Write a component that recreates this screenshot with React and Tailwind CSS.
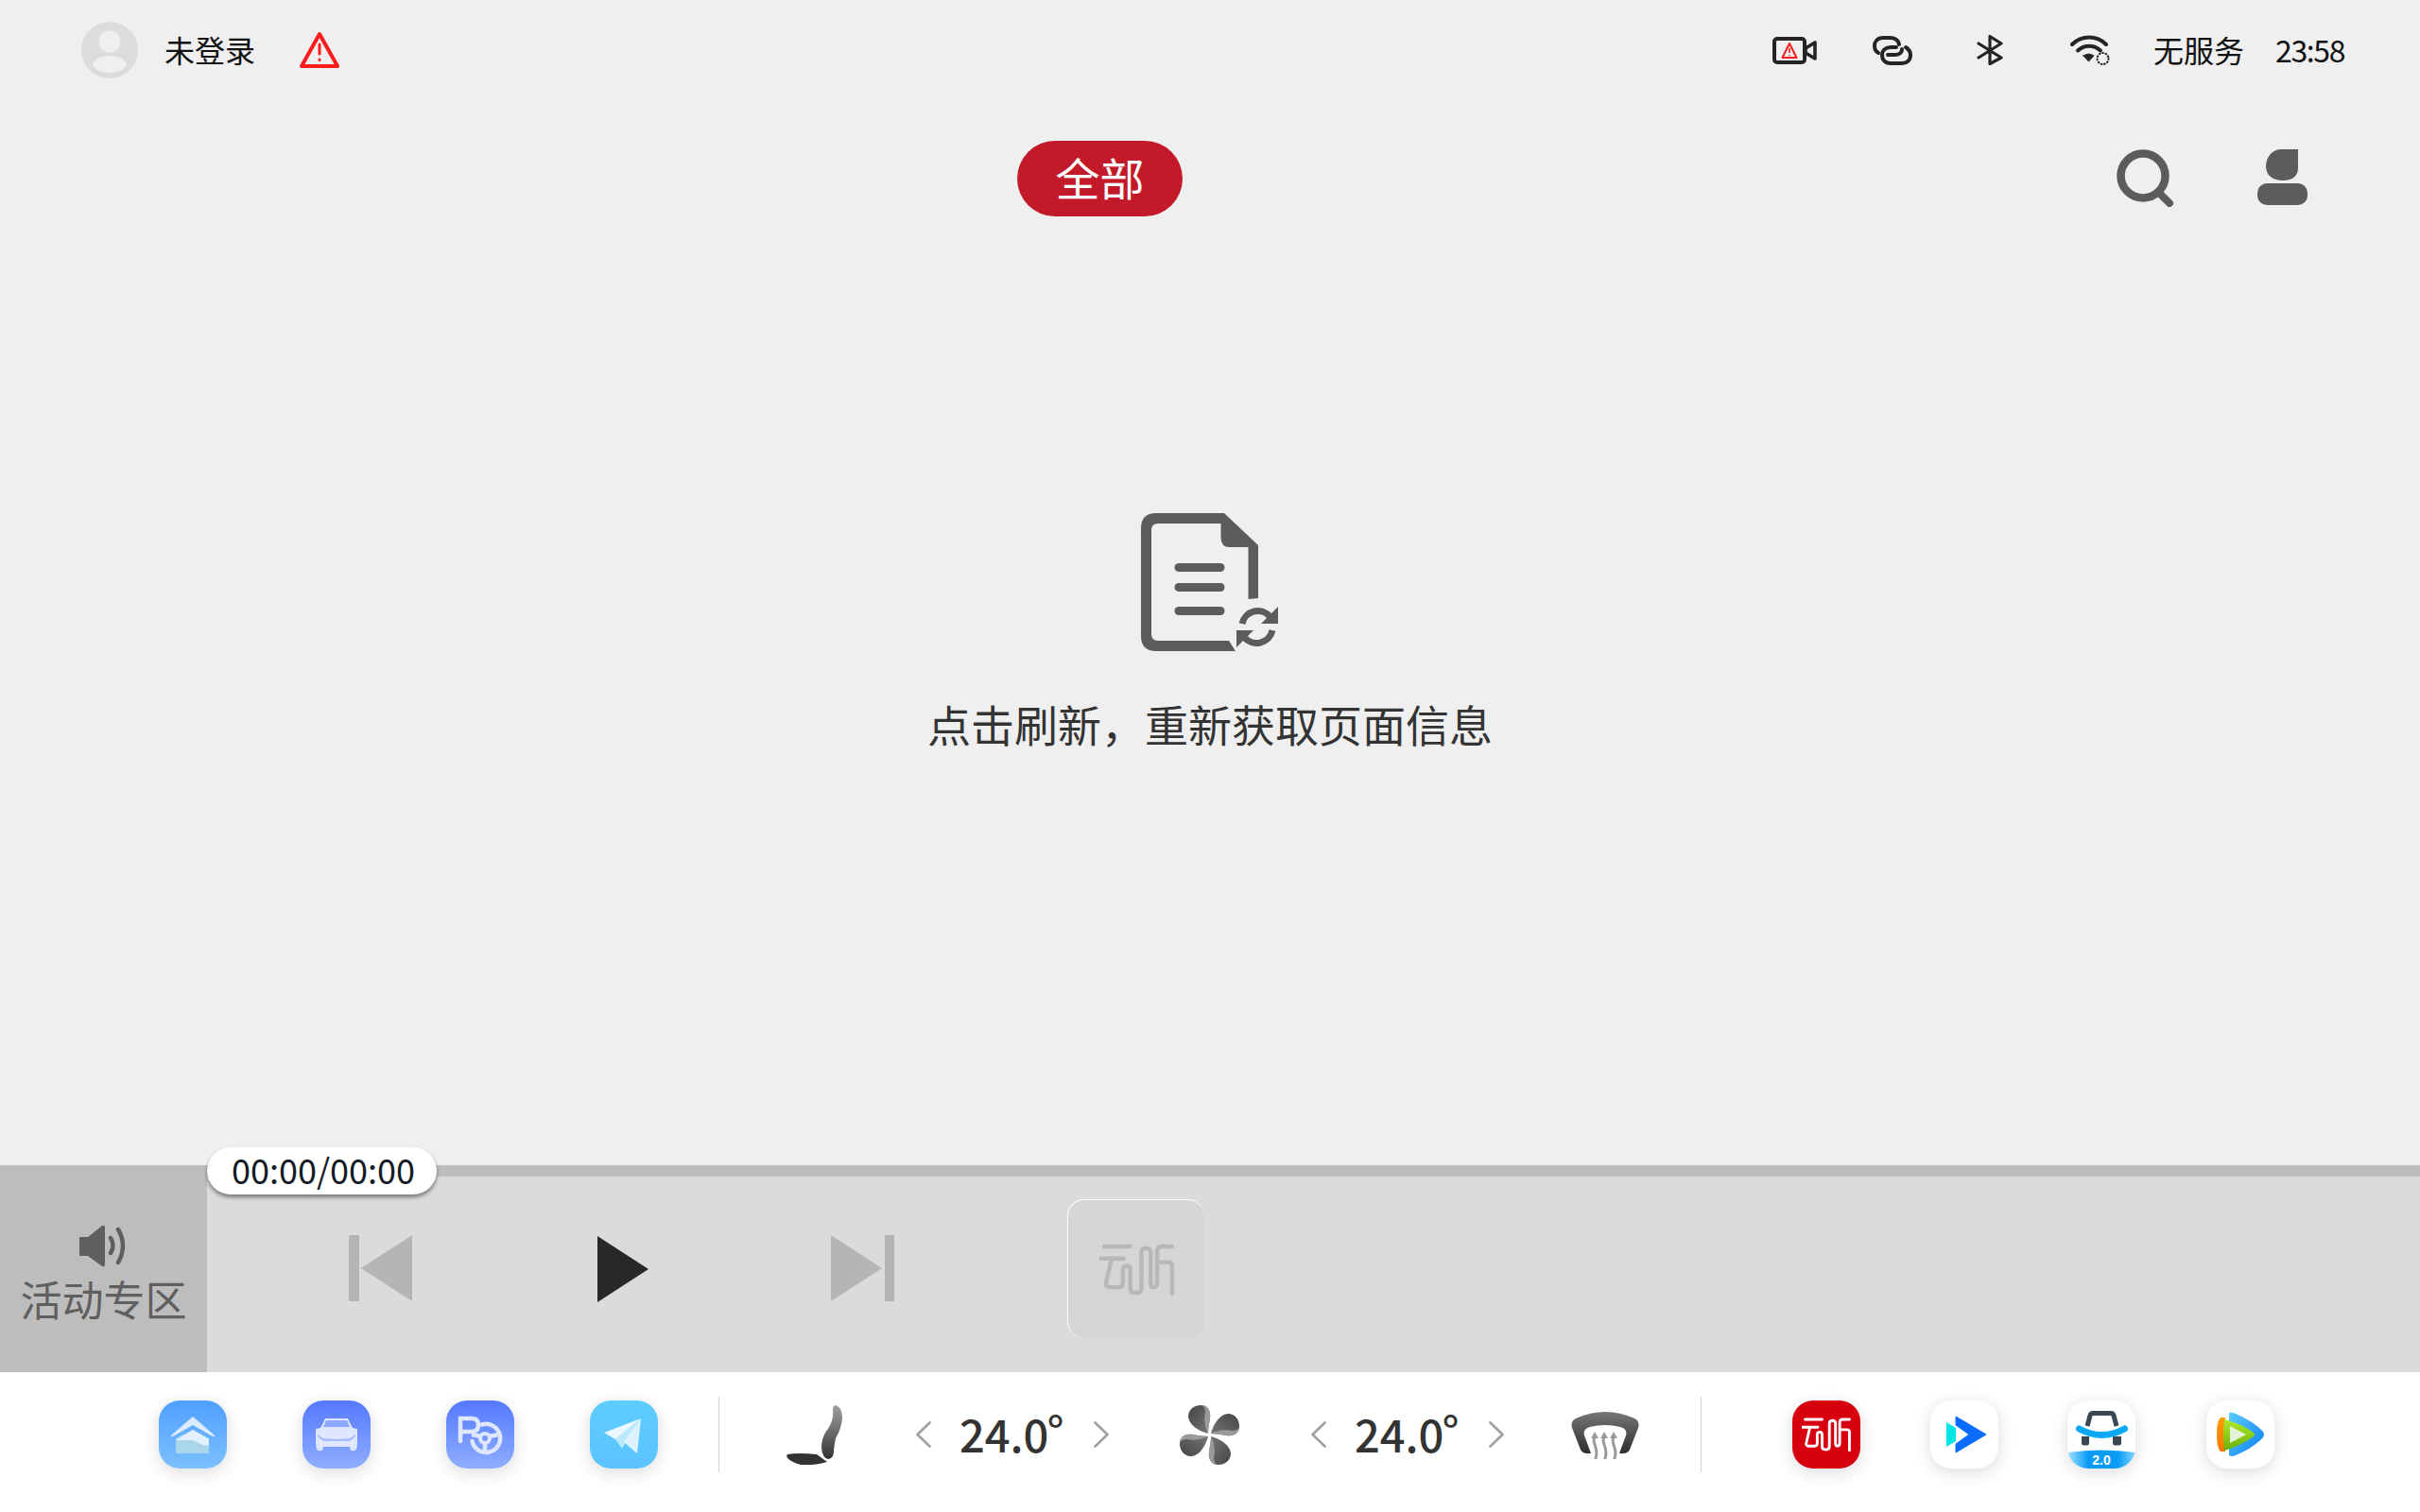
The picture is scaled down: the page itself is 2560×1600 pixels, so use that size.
import React from 'react';

// stylised logo used in both the player tile and the dock
const YunTing = ({ color, className }) => (
    <svg viewBox="0 0 80 56" className={className} fill="none" stroke={color} strokeWidth="4.5" strokeLinecap="round" strokeLinejoin="round">
        <path d="M5 3 H33 M1 16 H26 M13 16 L7 42 Q6 47 11 47 H21 Q25 47 25 42 V28 Q25 24 29 24 Q33 24 33 28 V48 Q33 53 39 53 Q45 53 45 48 V10 Q45 5 50 5 Q55 5 55 10 V42 Q55 47 58 47 Q62 47 62 42 V8 Q62 3 67 3 H78 M62 20 H74 Q78 20 78 24 V54" />
    </svg>
);

const Chevron = ({ dir }) => (
    <svg width="16" height="28" viewBox="0 0 16 28" fill="none" stroke="#9e9e9e" strokeWidth="2.6" strokeLinecap="round" strokeLinejoin="round" className="shrink-0">
        <path d={dir === 'left' ? 'M14.5 1.5 L1.5 14 L14.5 26.5' : 'M1.5 1.5 L14.5 14 L1.5 26.5'} />
    </svg>
);

const Temp = () => (
    <div className="w-[108px] ml-[30px] mr-[34px] mb-[3px] text-[47px] font-medium leading-none text-[#333333] whitespace-nowrap">
        24.0<span className="inline-block -translate-y-[4px] -translate-x-[2px]">°</span>
    </div>
);

const AppTile = ({ className, children }) => (
    <div className={`w-[72px] h-[72px] shrink-0 rounded-[22px] overflow-hidden shadow-[0_4px_18px_rgba(0,0,0,0.14)] ${className}`}>
        <svg width="72" height="72" viewBox="0 0 72 72">{children}</svg>
    </div>
);

const Divider = ({ className }) => <div className={`w-[1px] h-[80px] bg-[#d4d4d4] shrink-0 ${className}`} />;

const App = () => {
    return (
        <div className="w-[2560px] h-[1600px] bg-[#efefef] flex flex-col overflow-hidden font-['Noto_Sans_CJK_SC','Noto_Sans',sans-serif]">
            {/* Status bar */}
            <div className="h-[106px] shrink-0 flex items-center justify-between pl-[86px] pr-[80px]">
                <div className="flex items-center">
                    <svg width="60" height="60" viewBox="0 0 60 60">
                        <circle cx="30" cy="30" r="30" fill="#dcdcdc" />
                        <circle cx="30" cy="21" r="11.5" fill="#efefef" />
                        <ellipse cx="30" cy="45" rx="17.5" ry="9" fill="#efefef" />
                    </svg>
                    <span className="ml-[28px] mb-[3px] text-[32px] leading-none text-[#111111]">未登录</span>
                    <svg width="42" height="40" viewBox="0 0 42 40" className="ml-[47px]" fill="none" stroke="#fb1c1c" strokeLinecap="round" strokeLinejoin="round">
                        <path d="M21 3 L40 37 H2 Z" strokeWidth="4" />
                        <path d="M21 14 V24 M21 30 V30.5" strokeWidth="3" />
                    </svg>
                </div>
                <div className="flex items-center">
                    <svg width="47" height="29" viewBox="0 0 47 29" fill="none" stroke="#242424" strokeLinejoin="round">
                        <rect x="2" y="2" width="32" height="25" rx="3" strokeWidth="4" />
                        <path d="M35 12 L45 6 V23 L35 17 Z" strokeWidth="3.6" />
                        <path d="M18 7 L25.5 22 H10.5 Z" stroke="#fb1c1c" strokeWidth="2" />
                        <path d="M18 12 V17 M18 19 V20" stroke="#fb1c1c" strokeWidth="1.6" />
                    </svg>
                    <svg width="42" height="31" viewBox="0 0 42 31" className="ml-[59px]" fill="none" stroke="#242424" strokeWidth="4" strokeLinecap="round">
                        <path d="M28 9 C27 4 23 2 18 2 H11 C5 2 2 6 2 10.5 C2 14 4 17 6 18" />
                        <path d="M35 12 C38 14 40 17 40 20 C40 26 36 29 31 29 H19 C13 29 10 25 10 20.5 C10 15 14 12 19 12 H25" />
                        <path d="M16 20 H24 C29 20 31 17 31 14" />
                    </svg>
                    <svg width="29" height="32" viewBox="0 0 29 32" className="ml-[68px]" fill="none" stroke="#242424" strokeWidth="3.2" strokeLinecap="round" strokeLinejoin="round">
                        <path d="M2 9 L26 24 L14 30.5 V1.5 L26 9 L2 24" />
                    </svg>
                    <svg width="42" height="32" viewBox="0 0 42 32" className="ml-[70px]" fill="none" stroke="#242424" strokeLinecap="round">
                        <path d="M2 10 C12 0 28 0 38 10" strokeWidth="4" />
                        <path d="M8 16.5 C15 10 25 10 32 16.5" strokeWidth="4" />
                        <path d="M14 22 L19.5 28 L25 22 C21 19.5 18 19.5 14 22 Z" fill="#242424" strokeWidth="1" />
                        <circle cx="34.5" cy="25" r="6" strokeWidth="2" strokeDasharray="0.8 2.6" />
                    </svg>
                    <span className="ml-[46px] mb-[3px] text-[32px] leading-none text-[#111111]">无服务</span>
                    <span className="ml-[33px] mb-[3px] text-[32px] leading-none text-[#111111] tracking-[-1.4px]">23:58</span>
                </div>
            </div>

            {/* Category row */}
            <div className="shrink-0 flex items-start justify-between pl-[1076px] pr-[119px] mt-[43px]">
                <div className="w-[175px] h-[80px] pb-[5px] rounded-full bg-[#c21a29] flex items-center justify-center text-white text-[47px] leading-none">
                    全部
                </div>
                <div className="flex items-start gap-[88px] mt-[9px]">
                    <svg width="61" height="61" viewBox="0 0 61 61" fill="none" stroke="#5c5c5c" strokeLinecap="round">
                        <circle cx="28" cy="28" r="23.5" strokeWidth="8.5" />
                        <path d="M46 47 L56 57" strokeWidth="8" />
                    </svg>
                    <svg width="53" height="59" viewBox="0 0 53 59" fill="#5c5c5c">
                        <path d="M25 0 H43 V20 C43 29 36 33 27 33 C17 33 9 28 9 18 C9 8 16 0 25 0 Z" />
                        <rect x="0" y="36" width="53" height="23" rx="10" />
                    </svg>
                </div>
            </div>

            {/* Empty state */}
            <div className="flex-1 flex flex-col items-center pt-[314px]">
                <svg width="146" height="146" viewBox="0 0 146 146" fill="#5c5c5c">
                    <path d="M16 0 H88 L124 34 V90 L113.5 91 V36 H94 Q84.5 36 84.5 26 V11 H18 Q11 11 11 18 V128 Q11 135 18 135 H93 L100 146 H16 Q0 146 0 130 V16 Q0 0 16 0 Z" />
                    <rect x="35.5" y="53" width="53" height="9" rx="4.5" />
                    <rect x="35.5" y="74" width="53" height="9" rx="4.5" />
                    <rect x="35.5" y="99" width="53" height="9" rx="4.5" />
                    <path d="M145 99 V117 H127 Z M101 142 V124 H119 Z" />
                    <path d="M107 117 A17 17 0 0 1 137 110 M139 124 A17 17 0 0 1 109 131" fill="none" stroke="#5c5c5c" strokeWidth="7" />
                </svg>
                <p className="mt-[50px] text-[46px] leading-[52px] text-[#333333] whitespace-nowrap">
                    点击刷新，重新获取页面信息
                </p>
            </div>

            {/* Player */}
            <div className="relative h-[219px] shrink-0 flex">
                <div className="w-[219px] bg-[#bdbdbd] flex flex-col items-center pt-[63px]">
                    <svg width="51" height="45" viewBox="0 0 51 45" fill="#5f5f5f">
                        <path d="M1 13 H9 L24 1 Q27 0 27 3 V42 Q27 45 24 44 L9 33 H1 Q0 33 0 32 V14 Q0 13 1 13 Z" />
                        <path d="M33 14 Q38 22 33 30 M41 5 Q51 22 41 40" fill="none" stroke="#5f5f5f" strokeWidth="4.5" strokeLinecap="round" />
                    </svg>
                    <span className="mt-[9px] text-[44px] leading-[48px] text-[#5f5f5f] whitespace-nowrap">活动专区</span>
                </div>
                <div className="flex-1 flex flex-col bg-[#dbdbdb]">
                    <div className="h-[12px] bg-[#bdbdbd]" />
                    <div className="flex items-start">
                        <svg width="67" height="70" viewBox="0 0 67 70" fill="#b5b5b5" className="ml-[150px] mt-[62px]">
                            <rect x="0" y="0" width="11" height="70" />
                            <path d="M67 0 V70 L13 35 Z" />
                        </svg>
                        <svg width="54" height="70" viewBox="0 0 54 70" fill="#282828" className="ml-[196px] mt-[63px]">
                            <path d="M0 0 L54 35 L0 70 Z" />
                        </svg>
                        <svg width="67" height="70" viewBox="0 0 67 70" fill="#b5b5b5" className="ml-[193px] mt-[62px]">
                            <path d="M0 0 L54 35 L0 70 Z" />
                            <rect x="57" y="0" width="10" height="70" />
                        </svg>
                        <div className="ml-[183px] mt-[24px] w-[145px] h-[147px] rounded-[18px] bg-[#d5d5d5] border-t-[1px] border-l-[1px] border-t-white border-l-white flex items-start justify-center pt-[46px]">
                            <YunTing color="#b8b8b8" className="w-[79px] h-[55px]" />
                        </div>
                    </div>
                </div>
                <div className="absolute left-[219px] top-[-19px] w-[243px] h-[50px] pb-[5px] pl-[3px] rounded-full bg-white shadow-[0_3px_4px_rgba(0,0,0,0.45)] flex items-center justify-center text-[36px] leading-none text-[#151b26]">
                    00:00/00:00
                </div>
            </div>

            {/* Dock */}
            <div className="h-[148px] shrink-0 bg-white flex items-center pl-[168px] pb-[16px]">
                <div className="flex items-center gap-[80px]">
                    <AppTile className="bg-linear-to-b from-[#4f9fff] to-[#7cc0ff]">
                        <path d="M36 17 L59 37 Q60 39 57 38 L36 26 L15 38 Q12 39 13 37 Z" fill="#dcebff" />
                        <path d="M18 40 L36 31 L53 40 V55 Q53 56 52 56 H19 Q18 56 18 55 Z" fill="#a9d6ea" />
                        <path d="M18 42 L36 31 L53 41 V47 Q50 48 46 47 L36 42 L18 42 Z" fill="#e3f0ff" />
                    </AppTile>
                    <AppTile className="bg-linear-to-b from-[#5578ff] to-[#8fadff]">
                        <path d="M24 19 H48 L53 29 L58 30 V45 Q58 50 56 53 H51 L50 49 H22 L21 53 H16 Q14 50 14 45 V30 L19 29 Z" fill="#dfe6ff" />
                        <path d="M25 21 H47 L50 28 H22 Z" fill="#8fa8ff" />
                        <path d="M16 36 L22 40 L36 41 L50 40 L56 36 V38 L50 43 H22 L16 38 Z" fill="#a9bbff" />
                    </AppTile>
                    <AppTile className="bg-linear-to-b from-[#5578ff] to-[#8fadff]">
                        <path d="M15 43 V19 H27 Q34 19 34 26 Q34 33 27 33 H18" fill="none" stroke="#dfe6ff" strokeWidth="4.5" strokeLinecap="round" />
                        <path d="M38 25.5 A15 15 0 1 1 27.5 43" fill="none" stroke="#dfe6ff" strokeWidth="4.5" strokeLinecap="round" />
                        <circle cx="41" cy="40" r="5" fill="none" stroke="#dfe6ff" strokeWidth="4" />
                        <path d="M27 36 L37 38 M45 38 L56 36 M41 45 V55" stroke="#dfe6ff" strokeWidth="4.5" />
                    </AppTile>
                    <AppTile className="bg-linear-to-b from-[#5ecdff] to-[#5cc2ff]">
                        <path d="M54 19 L15 34 L27 41 Z" fill="#ecf7ff" />
                        <path d="M54 19 L27 41 L34 51 L38 43 Z" fill="#bdeafb" />
                        <path d="M54 19 L36 44 L50 56 Z" fill="#dff3fe" />
                    </AppTile>
                </div>
                <Divider className="ml-[64px]" />
                <svg width="59" height="63" viewBox="0 0 59 63" className="ml-[71px] shrink-0">
                    <defs>
                        <linearGradient id="seatBack" x1="0" y1="0" x2="0" y2="1">
                            <stop offset="0" stopColor="#a0a0a0" />
                            <stop offset="1" stopColor="#333333" />
                        </linearGradient>
                    </defs>
                    <path d="M1 52 Q12 50 32 52 L43 60 Q30 64 15 63 Q3 60 0 54 Z" fill="#333333" />
                    <path d="M52 0 Q59 2 59 14 Q58 25 52 35 Q50 45 50 50 Q49 57 44 57 Q38 56 37 45 Q37 33 44 25 Q50 16 49 5 Q49 0 52 0 Z" fill="url(#seatBack)" />
                </svg>
                <div className="ml-[78px] flex items-center">
                    <Chevron dir="left" />
                    <Temp />
                    <Chevron dir="right" />
                </div>
                <svg width="63" height="63" viewBox="0 0 63 63" className="ml-[75px] shrink-0">
                    <defs>
                        <linearGradient id="fanBlade" x1="0" y1="0" x2="1" y2="1">
                            <stop offset="0" stopColor="#444444" />
                            <stop offset="1" stopColor="#777777" />
                        </linearGradient>
                    </defs>
                    {[0, 90, 180, 270].map((deg) => (
                        <g key={deg} transform={`rotate(${deg} 31.5 31.5)`}>
                            <path d="M30 30 C22 28 10 22 9 12 C9 4 16 0 22 0 C30 0 33 6 32 14 C31 20 30 25 30 30 Z" fill="url(#fanBlade)" />
                            <path d="M24 0 C30 1 33 6 32 14 C31 20 30 25 30 30 C27 24 25 14 27 8 C27 4 26 2 24 0 Z" fill="#9a9a9a" />
                        </g>
                    ))}
                </svg>
                <div className="ml-[76px] flex items-center">
                    <Chevron dir="left" />
                    <Temp />
                    <Chevron dir="right" />
                </div>
                <svg width="72" height="51" viewBox="0 0 72 51" className="ml-[71px] shrink-0">
                    <defs>
                        <linearGradient id="defrost" x1="0" y1="0" x2="0" y2="1">
                            <stop offset="0" stopColor="#777777" />
                            <stop offset="1" stopColor="#2e2e2e" />
                        </linearGradient>
                    </defs>
                    <path d="M5 8 Q36 -6 67 8 Q73 11 71 18 L62 41 Q60 45 55 45 H51 L58 26 Q60 19 52 17 Q36 13 20 17 Q12 19 14 26 L21 45 H17 Q12 45 10 41 L1 18 Q-1 11 5 8 Z" fill="url(#defrost)" />
                    <path d="M25 28 C21 34 30 39 26 50 M35 28 C31 34 40 39 36 50 M45 28 C41 34 50 39 46 50" fill="none" stroke="#9a9a9a" strokeWidth="3" strokeLinecap="round" />
                    <path d="M25 22 L29 29 H21 Z M35 22 L39 29 H31 Z M45 22 L49 29 H41 Z" fill="#9a9a9a" />
                </svg>
                <Divider className="ml-[65px]" />
                <div className="ml-[96px] w-[72px] h-[72px] shrink-0 rounded-[22px] bg-[#d6000f] shadow-[0_4px_18px_rgba(0,0,0,0.14)] flex items-center justify-center">
                    <YunTing color="#ffffff" className="w-[52px] h-[36px]" />
                </div>
                <AppTile className="ml-[74px] bg-white">
                    <path d="M17 23 L27 29 V43 L17 49 Z" fill="#05e5e5" />
                    <path d="M27 17 L59 36 L27 55 V46 L41 36 L27 26 Z" fill="#0a6cff" strokeLinejoin="round" stroke="#0a6cff" strokeWidth="1" />
                </AppTile>
                <AppTile className="ml-[73px] bg-white">
                    <defs>
                        <linearGradient id="band" x1="0" y1="0" x2="1" y2="0">
                            <stop offset="0" stopColor="#a5e2ff" />
                            <stop offset="0.3" stopColor="#0a9cf5" />
                            <stop offset="0.75" stopColor="#0a9cf5" />
                            <stop offset="1" stopColor="#86d4ff" />
                        </linearGradient>
                    </defs>
                    <path d="M21 27 L24 16 Q24.5 13.5 27 13.5 H46 Q48.5 13.5 49 16 L52 27" fill="none" stroke="#3a4750" strokeWidth="5" />
                    <path d="M15 38 H23 V45 Q23 47.5 20.5 47.5 H17.5 Q15 47.5 15 45 Z M48 38 H57 V45 Q57 47.5 54.5 47.5 H50.5 Q48 47.5 48 45 Z" fill="#3a4750" />
                    <path d="M12.5 30 Q36.5 43 60.5 30" fill="none" stroke="#0aa9f5" strokeWidth="7" strokeLinecap="round" />
                    <path d="M0 55 Q36 50 72 55 V72 H0 Z" fill="url(#band)" />
                    <text x="36" y="68" textAnchor="middle" fontSize="14" fontWeight="600" fill="#ffffff" fontFamily="Liberation Sans">2.0</text>
                </AppTile>
                <AppTile className="ml-[75px] bg-white">
                    <defs>
                        <linearGradient id="tvBlue" x1="0" y1="0" x2="1" y2="1">
                            <stop offset="0" stopColor="#5ccbff" />
                            <stop offset="1" stopColor="#0b7ff5" />
                        </linearGradient>
                        <linearGradient id="tvGreen" x1="0" y1="0" x2="0" y2="1">
                            <stop offset="0" stopColor="#b0ea2a" />
                            <stop offset="1" stopColor="#68b00a" />
                        </linearGradient>
                        <linearGradient id="tvOrange" x1="0" y1="0" x2="0" y2="1">
                            <stop offset="0" stopColor="#ff9d00" />
                            <stop offset="1" stopColor="#f57400" />
                        </linearGradient>
                    </defs>
                    <path d="M15 18 H20 V54 H15 Q11 50 11 36 Q11 22 15 18 Z" fill="url(#tvOrange)" />
                    <path d="M24 13 Q27 12 31 14 Q50 22 60 33 Q62 36 60 39 Q50 50 31 58 Q27 60 24 58 Z" fill="url(#tvBlue)" />
                    <path d="M19 20 Q36 24 50 34 Q52 36 50 38 Q36 48 19 53 Q17 36 19 20 Z" fill="url(#tvGreen)" />
                    <path d="M25 27 L42 36 L25 45 Z" fill="#e6f2d8" />
                </AppTile>
            </div>
        </div>
    );
};

export default App;
